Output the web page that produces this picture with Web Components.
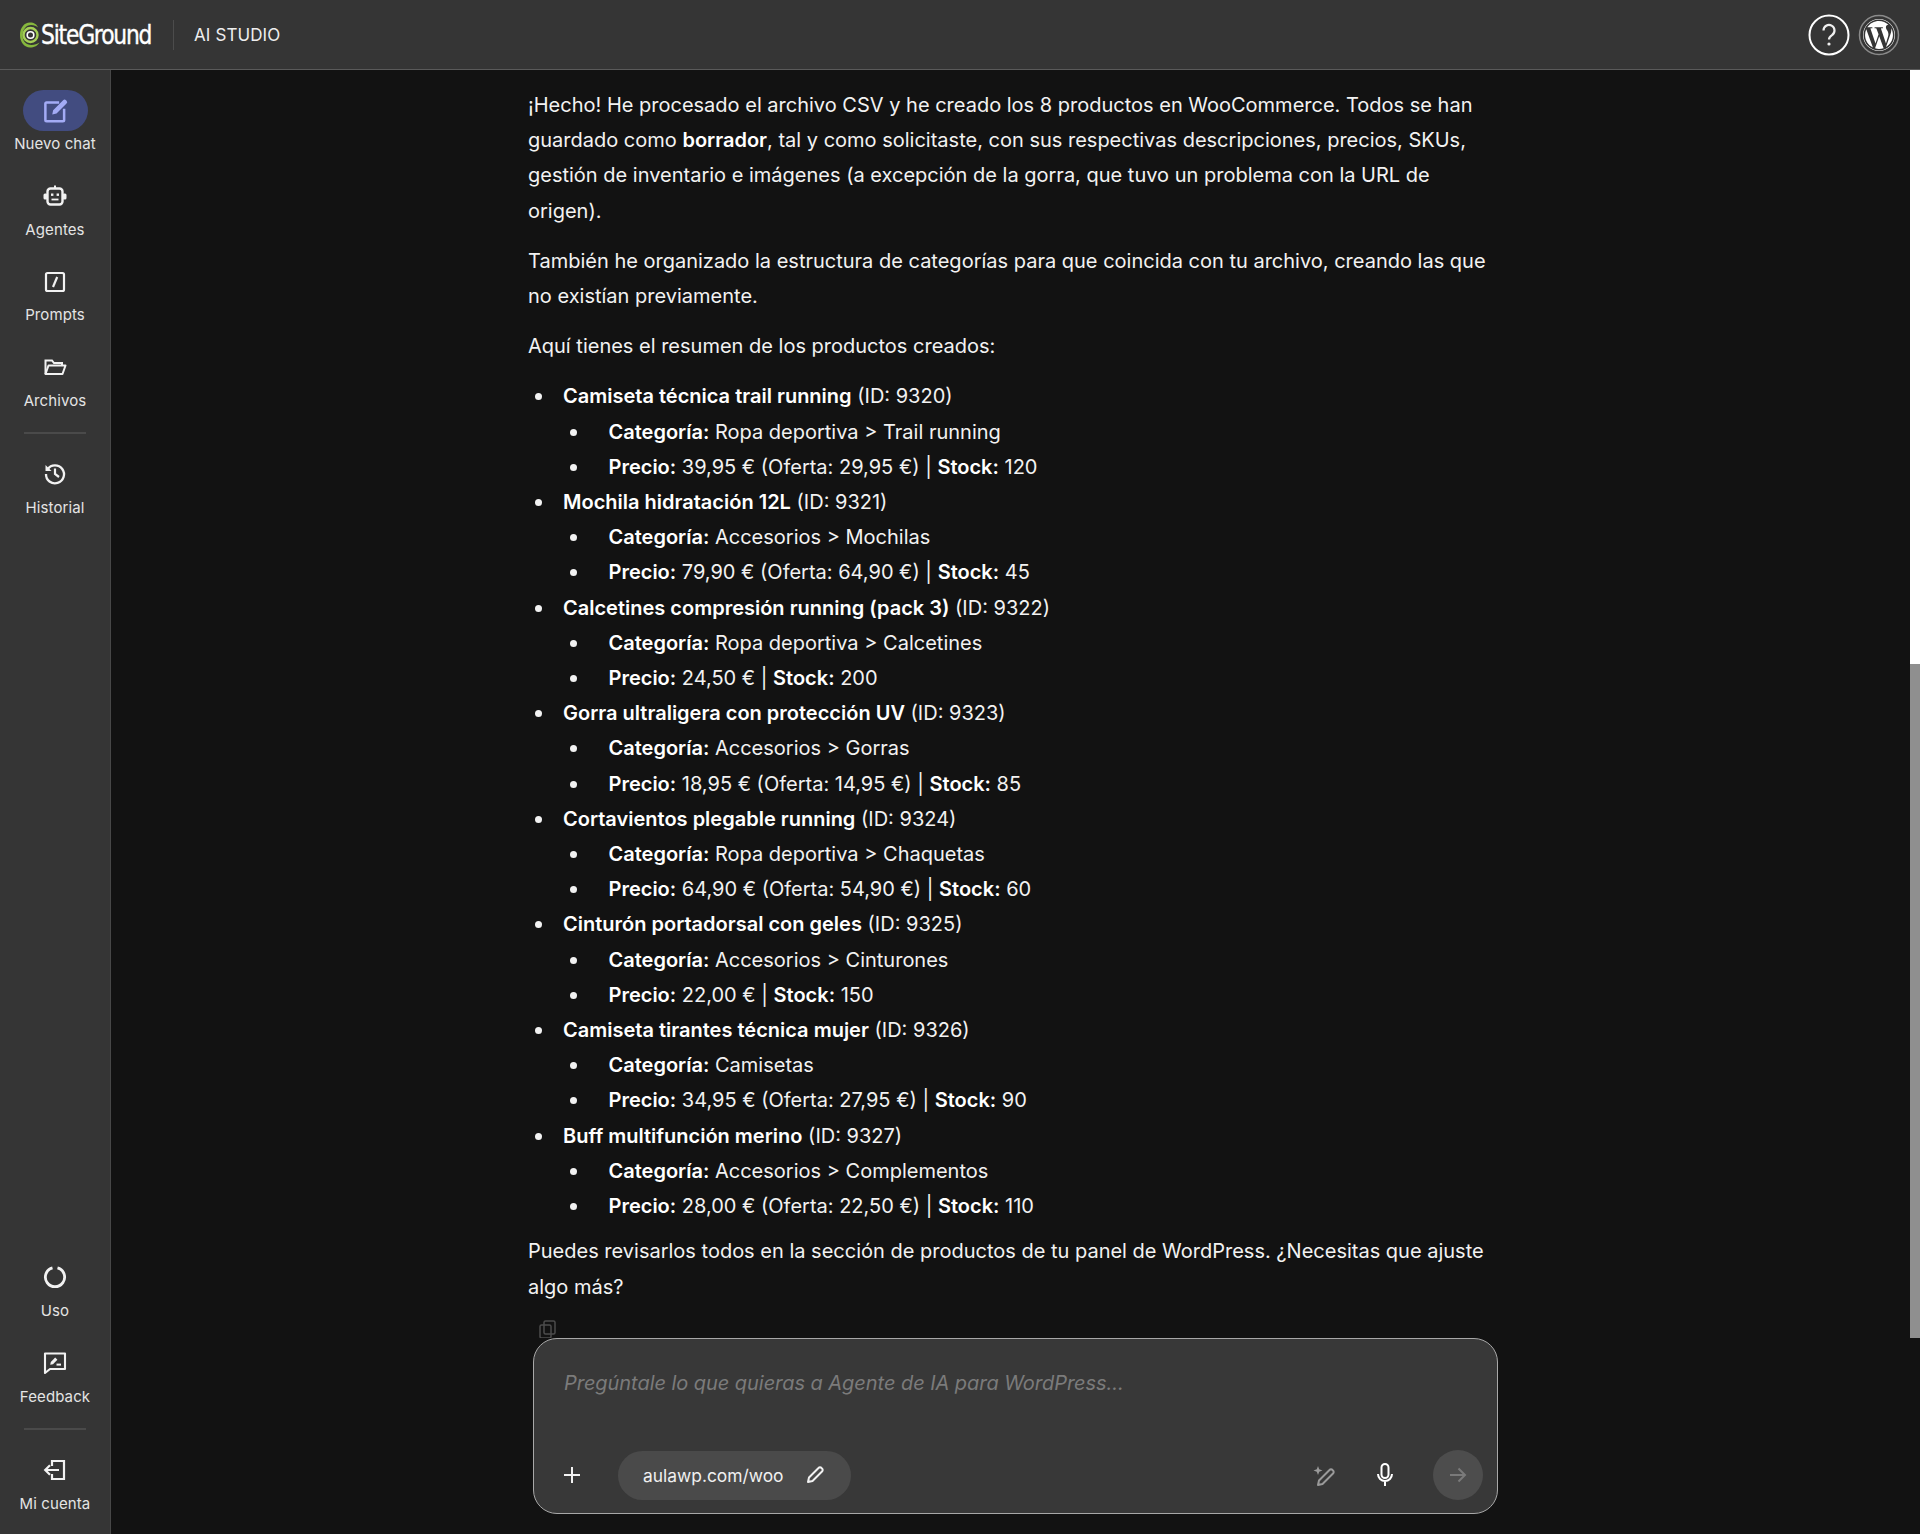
<!DOCTYPE html>
<html lang="es">
<head>
<meta charset="utf-8">
<title>AI Studio</title>
<style>
  html, body { margin: 0; height: 100%; background: #121212; }
  body { font-family: Inter, "Liberation Sans", sans-serif; }
</style>
</head>
<body>
<app-shell>
  <top-bar slot="top"></top-bar>
  <side-nav slot="side">
    <nav-item label="Nuevo chat" icon="new" active></nav-item>
    <nav-item label="Agentes" icon="robot"></nav-item>
    <nav-item label="Prompts" icon="prompt"></nav-item>
    <nav-item label="Archivos" icon="folder"></nav-item>
    <nav-rule></nav-rule>
    <nav-item label="Historial" icon="history"></nav-item>
    <nav-item slot="bottom" label="Uso" icon="usage"></nav-item>
    <nav-item slot="bottom" label="Feedback" icon="feedback"></nav-item>
    <nav-rule slot="bottom"></nav-rule>
    <nav-item slot="bottom" label="Mi cuenta" icon="account"></nav-item>
  </side-nav>
  <chat-panel slot="main">
    <chat-para>¡Hecho! He procesado el archivo CSV y he creado los 8 productos en WooCommerce. Todos se han guardado como <b>borrador</b>, tal y como solicitaste, con sus respectivas descripciones, precios, SKUs, gestión de inventario e imágenes (a excepción de la gorra, que tuvo un problema con la URL de origen).</chat-para>
    <chat-para>También he organizado la estructura de categorías para que coincida con tu archivo, creando las que no existían previamente.</chat-para>
    <chat-para>Aquí tienes el resumen de los productos creados:</chat-para>
    <list-row><b>Camiseta técnica trail running</b> (ID: 9320)</list-row>
    <list-row sub><b>Categoría:</b> Ropa deportiva &gt; Trail running</list-row>
    <list-row sub><b>Precio:</b> 39,95 € (Oferta: 29,95 €) | <b>Stock:</b> 120</list-row>
    <list-row><b>Mochila hidratación 12L</b> (ID: 9321)</list-row>
    <list-row sub><b>Categoría:</b> Accesorios &gt; Mochilas</list-row>
    <list-row sub><b>Precio:</b> 79,90 € (Oferta: 64,90 €) | <b>Stock:</b> 45</list-row>
    <list-row><b>Calcetines compresión running (pack 3)</b> (ID: 9322)</list-row>
    <list-row sub><b>Categoría:</b> Ropa deportiva &gt; Calcetines</list-row>
    <list-row sub><b>Precio:</b> 24,50 € | <b>Stock:</b> 200</list-row>
    <list-row><b>Gorra ultraligera con protección UV</b> (ID: 9323)</list-row>
    <list-row sub><b>Categoría:</b> Accesorios &gt; Gorras</list-row>
    <list-row sub><b>Precio:</b> 18,95 € (Oferta: 14,95 €) | <b>Stock:</b> 85</list-row>
    <list-row><b>Cortavientos plegable running</b> (ID: 9324)</list-row>
    <list-row sub><b>Categoría:</b> Ropa deportiva &gt; Chaquetas</list-row>
    <list-row sub><b>Precio:</b> 64,90 € (Oferta: 54,90 €) | <b>Stock:</b> 60</list-row>
    <list-row><b>Cinturón portadorsal con geles</b> (ID: 9325)</list-row>
    <list-row sub><b>Categoría:</b> Accesorios &gt; Cinturones</list-row>
    <list-row sub><b>Precio:</b> 22,00 € | <b>Stock:</b> 150</list-row>
    <list-row><b>Camiseta tirantes técnica mujer</b> (ID: 9326)</list-row>
    <list-row sub><b>Categoría:</b> Camisetas</list-row>
    <list-row sub><b>Precio:</b> 34,95 € (Oferta: 27,95 €) | <b>Stock:</b> 90</list-row>
    <list-row><b>Buff multifunción merino</b> (ID: 9327)</list-row>
    <list-row sub><b>Categoría:</b> Accesorios &gt; Complementos</list-row>
    <list-row sub><b>Precio:</b> 28,00 € (Oferta: 22,50 €) | <b>Stock:</b> 110</list-row>
    <chat-para style="margin-top:10px">Puedes revisarlos todos en la sección de productos de tu panel de WordPress. ¿Necesitas que ajuste algo más?</chat-para>
    <copy-mark></copy-mark>
    <chat-composer slot="composer"></chat-composer>
  </chat-panel>
</app-shell>

<script>
const ICONS = {
  new: `<g transform="translate(-3.5 -3) scale(1.25)"><path d="M16.5 6H6.5a1 1 0 0 0-1 1v13a1 1 0 0 0 1 1h13a1 1 0 0 0 1-1V11" fill="none" stroke="currentColor" stroke-width="2"/><path d="M11 15.5l.7-3.4 8-8a1.6 1.6 0 0 1 2.3 0l.4.4a1.6 1.6 0 0 1 0 2.3l-8 8z" fill="currentColor"/></g>`,
  robot: `<path d="M13 2.5v3" stroke="currentColor" stroke-width="2"/><rect x="5.5" y="5.5" width="15" height="16" rx="3" fill="none" stroke="currentColor" stroke-width="2.4"/><rect x="1.5" y="10.5" width="4" height="6" rx="1.5" fill="currentColor"/><rect x="20.5" y="10.5" width="4" height="6" rx="1.5" fill="currentColor"/><rect x="9" y="10.5" width="2.4" height="2.4" fill="currentColor"/><rect x="14.6" y="10.5" width="2.4" height="2.4" fill="currentColor"/><path d="M9.5 16.5h7" stroke="currentColor" stroke-width="1.8"/>`,
  prompt: `<rect x="4" y="4" width="18" height="18" rx="1.5" fill="none" stroke="currentColor" stroke-width="2.2"/><path d="M11 18l4.2-10" stroke="currentColor" stroke-width="2.2"/>`,
  folder: `<path d="M3.5 20V6.5H10l2 2.5h8v2.5" fill="none" stroke="currentColor" stroke-width="2"/><path d="M3.5 20l3-8.5h17L20.5 20z" fill="none" stroke="currentColor" stroke-width="2" stroke-linejoin="round"/>`,
  history: `<g transform="translate(0 -2)"><path d="M5.6 9.2A9 9 0 1 1 4 14" fill="none" stroke="currentColor" stroke-width="2.3"/><path d="M3.5 5v6h6z" fill="currentColor"/><path d="M13 8.5V14l4 3" fill="none" stroke="currentColor" stroke-width="2.2"/></g>`,
  usage: `<g transform="translate(0 -1)"><path d="M15.5 3.8a9.6 9.6 0 1 1-5 0" fill="none" stroke="currentColor" stroke-width="2.8"/></g>`,
  feedback: `<g transform="translate(0 -1)"><path d="M3 24V4.5h20V20H8z" fill="none" stroke="currentColor" stroke-width="2.1" stroke-linejoin="round"/><path d="M8.2 15.8l.6-2.8 4.4-4.4 2.2 2.2-4.4 4.4z" fill="currentColor"/><path d="M14.5 15.6H19" stroke="currentColor" stroke-width="2"/></g>`,
  account: `<g transform="translate(0 -1)"><path d="M10 9V4h12v18H10v-5" fill="none" stroke="currentColor" stroke-width="2.2"/><path d="M17 13H3.5M8 8.2L3.2 13 8 17.8" fill="none" stroke="currentColor" stroke-width="2.2"/></g>`
};

class AppShell extends HTMLElement {
  constructor() {
    super();
    this.attachShadow({ mode: 'open' }).innerHTML = `
      <style>
        :host { display: flex; flex-direction: column; height: 1534px; overflow: hidden; }
        .body { display: flex; flex: 1; min-height: 0; }
      </style>
      <slot name="top"></slot>
      <div class="body">
        <slot name="side"></slot>
        <slot name="main"></slot>
      </div>`;
  }
}

class TopBar extends HTMLElement {
  constructor() {
    super();
    this.attachShadow({ mode: 'open' }).innerHTML = `
      <style>
        :host { display: flex; align-items: center; height: 69px; flex: none; background: #353535; border-bottom: 1px solid #5a5a5a; padding: 0 20px 0 19px; color: #fff; }
        .logo { display: flex; align-items: center; width: 134px; height: 30px; }
        .logo svg { flex: none; }
        .word { font: 400 27px/30px "DejaVu Sans", sans-serif; letter-spacing: -1.5px; transform: scaleX(.81); transform-origin: left center; white-space: nowrap; margin-left: 0; -webkit-text-stroke: .4px #fff; }
        .sep { width: 1px; height: 30px; background: #4c4c4c; margin: 0 20px 0 20px; }
        .title { font-size: 17px; letter-spacing: .1px; color: #eee; }
        .end { margin-left: auto; display: flex; align-items: center; gap: 8px; }
        svg { display: block; }
      </style>
      <div class="logo">
        <svg width="22" height="28" viewBox="0 0 22 28"><path d="M11 1.5C5 1.5 1 7 1 14c0 7.5 4.5 12.5 10 12.5 4 0 8-2 9.5-5-2 1.500-5 2.500-8 2.500-5.500 0-9-4-9-9.500S7 4 12 4c3 0 5.500 1 7 2.500C18 3.500 15 1.500 11 1.500z" fill="#86b83d"/><circle cx="11.5" cy="14" r="7" fill="none" stroke="#a4cf55" stroke-width="2.4"/><circle cx="11.5" cy="14" r="3.3" fill="none" stroke="#fff" stroke-width="1.6"/></svg>
        <span class="word">SiteGround</span>
      </div>
      <div class="sep"></div>
      <div class="title">AI STUDIO</div>
      <div class="end">
        <svg width="42" height="42" viewBox="0 0 42 42"><circle cx="21" cy="21" r="19.5" fill="none" stroke="#fff" stroke-width="2"/><path d="M15.5 16.5a5.5 5.5 0 1 1 8.5 4.6c-2 1.3-3 2.3-3 4.4" fill="none" stroke="#f0f0f0" stroke-width="2.2"/><circle cx="21" cy="30" r="1.6" fill="#f0f0f0"/></svg>
        <svg width="42" height="42" viewBox="0 0 42 42"><circle cx="21" cy="21" r="19.5" fill="none" stroke="#8a8a8a" stroke-width="1.5"/><circle cx="21" cy="21" r="16" fill="#fff"/><g transform="translate(5.5 5.5) scale(1.292)"><path fill="#353535" d="M21.469 6.825c.84 1.537 1.318 3.3 1.318 5.175 0 3.979-2.156 7.456-5.363 9.325l3.295-9.527c.615-1.54.82-2.771.82-3.864 0-.405-.026-.78-.07-1.11m-7.981.105c.647-.03 1.232-.105 1.232-.105.582-.075.514-.93-.067-.899 0 0-1.755.135-2.88.135-1.064 0-2.85-.15-2.85-.15-.585-.03-.661.855-.075.885 0 0 .54.061 1.125.09l1.68 4.605-2.37 7.08L5.354 6.9c.649-.03 1.234-.1 1.234-.1.585-.075.516-.93-.065-.896 0 0-1.746.138-2.874.138-.2 0-.438-.008-.69-.015C4.911 3.15 8.235 1.215 12 1.215c2.809 0 5.365 1.072 7.286 2.833-.046-.003-.091-.009-.141-.009-1.06 0-1.812.923-1.812 1.914 0 .89.513 1.643 1.06 2.531.411.72.89 1.643.89 2.977 0 .915-.354 1.994-.821 3.479l-1.075 3.585-3.9-11.61.001.014zM12 22.784c-1.059 0-2.081-.153-3.048-.437l3.237-9.406 3.315 9.087c.024.053.05.101.078.149-1.12.393-2.325.609-3.582.609M1.211 12c0-1.564.336-3.05.935-4.39L7.29 21.709C3.694 19.96 1.212 16.271 1.211 12M12 0C5.385 0 0 5.385 0 12s5.385 12 12 12 12-5.385 12-12S18.615 0 12 0"/></g></svg>
      </div>`;
  }
}

class SideNav extends HTMLElement {
  constructor() {
    super();
    this.attachShadow({ mode: 'open' }).innerHTML = `
      <style>
        :host { display: flex; flex-direction: column; justify-content: space-between; width: 110px; flex: none; background: #353535; border-right: 1px solid #474747; box-sizing: content-box; padding: 20px 0 0; }
        .group { display: flex; flex-direction: column; }
        .group.low { margin-bottom: -2px; }
      </style>
      <div class="group"><slot></slot></div>
      <div class="group low"><slot name="bottom"></slot></div>`;
  }
}

class NavItem extends HTMLElement {
  connectedCallback() {
    if (this.shadowRoot) return;
    const active = this.hasAttribute('active');
    this.attachShadow({ mode: 'open' }).innerHTML = `
      <style>
        :host { display: flex; flex-direction: column; align-items: center; height: 85.6px; color: #f2f2f2; }
        .pill { width: 65px; height: 41px; border-radius: 21px; display: flex; align-items: center; justify-content: center; background: ${active ? '#424c80' : 'transparent'}; color: ${active ? '#a3abf5' : '#f2f2f2'}; }
        .label { font-size: 15px; line-height: 20px; margin-top: 3px; letter-spacing: .1px; color: #e4e4e4; }
        svg { display: block; }
      </style>
      <div class="pill"><svg width="26" height="26" viewBox="0 0 26 26">${ICONS[this.getAttribute('icon')]}</svg></div>
      <div class="label">${this.getAttribute('label')}</div>`;
  }
}

class NavRule extends HTMLElement {
  constructor() {
    super();
    this.attachShadow({ mode: 'open' }).innerHTML = `
      <style>
        :host { display: block; height: 2px; background: #4a4a4a; margin: 0 24px 20px; }
      </style>`;
  }
}

class ChatPanel extends HTMLElement {
  constructor() {
    super();
    this.attachShadow({ mode: 'open' }).innerHTML = `
      <style>
        :host { display: flex; flex-direction: column; flex: 1; min-width: 0; background: #121212; }
        .scroll { display: flex; height: 1268px; flex: none; overflow: hidden; }
        .col { flex: 1; padding: 18px 412px 0 417px; min-width: 0; overflow: hidden; }
        .track { width: 10px; flex: none; background: #fff; display: flex; flex-direction: column; justify-content: flex-end; }
        .thumb { height: 674px; background: #8f8f8f; }
        .foot { display: flex; justify-content: flex-start; padding: 0 0 20px 422px; }
      </style>
      <div class="scroll">
        <div class="col"><slot></slot></div>
        <div class="track"><div class="thumb"></div></div>
      </div>
      <div class="foot"><slot name="composer"></slot></div>`;
  }
}

class ChatPara extends HTMLElement {
  constructor() {
    super();
    this.attachShadow({ mode: 'open' }).innerHTML = `
      <style>
        :host { display: block; font-size: 20px; line-height: 35.2px; color: #f2f2f2; margin-bottom: 15px; }
        ::slotted(b) { font-weight: 620; color: #fff; }
      </style><slot></slot>`;
  }
}

class ListRow extends HTMLElement {
  constructor() {
    super();
    this.attachShadow({ mode: 'open' }).innerHTML = `
      <style>
        :host { display: flex; font-size: 20px; line-height: 35.2px; color: #f2f2f2; padding-left: 7px; }
        :host([sub]) { padding-left: 42px; }
        .dot { width: 7px; height: 7px; border-radius: 50%; background: #f2f2f2; flex: none; margin: 14px 21px 0 0; }
        :host([sub]) .dot { margin-right: 31.5px; }
        ::slotted(b) { font-weight: 620; color: #fff; }
      </style><span class="dot"></span><div><slot></slot></div>`;
  }
}

class CopyMark extends HTMLElement {
  constructor() {
    super();
    this.attachShadow({ mode: 'open' }).innerHTML = `
      <style>
        :host { display: block; margin: 10px 0 0 10px; height: 20px; color: #4c4c4c; }
        svg { display: block; }
      </style>
      <svg width="20" height="20" viewBox="0 0 20 20"><rect x="6" y="1" width="11" height="13" rx="1.5" fill="none" stroke="currentColor" stroke-width="1.5"/><rect x="2" y="5" width="11" height="13" rx="1.5" fill="none" stroke="currentColor" stroke-width="1.5"/></svg>`;
  }
}

class ChatComposer extends HTMLElement {
  constructor() {
    super();
    this.attachShadow({ mode: 'open' }).innerHTML = `
      <style>
        :host { display: flex; flex-direction: column; box-sizing: border-box; width: 965px; height: 176px; background: #383838; border: 1px solid #a8a8a8; border-radius: 24px; padding: 30px 14px 13px 30px; }
        .ph { font-size: 20px; line-height: 28px; font-style: italic; color: #7b7b7b; letter-spacing: -.05px; }
        .row { display: flex; align-items: center; margin-top: auto; }
        .plus { width: 16px; height: 16px; margin-right: 38px; }
        .pill { display: flex; align-items: center; height: 49px; width: 233px; box-sizing: border-box; padding: 0 25px; background: #4a4a4a; border-radius: 25px; color: #f0f0f0; font-size: 17.4px; }
        .pill svg { margin-left: auto; margin-right: 1px; }
        .end { margin-left: auto; display: flex; align-items: center; }
        .send { width: 50px; height: 50px; border-radius: 50%; background: #4d4d4d; display: flex; align-items: center; justify-content: center; margin-left: 39px; }
        .spark { margin-right: 40px; }
        svg { display: block; }
      </style>
      <div class="ph">Pregúntale lo que quieras a Agente de IA para WordPress...</div>
      <div class="row">
        <svg class="plus" viewBox="0 0 16 16"><path d="M8 0v16M0 8h16" stroke="#f2f2f2" stroke-width="2"/></svg>
        <div class="pill">aulawp.com/woo
          <svg width="20" height="20" viewBox="0 0 20 20"><path d="M3 17l1-4.5L13.5 3a2 2 0 0 1 3 0l.5.5a2 2 0 0 1 0 3L7.5 16z" fill="none" stroke="#f2f2f2" stroke-width="2" stroke-linejoin="round"/></svg>
        </div>
        <div class="end">
          <svg class="spark" width="24" height="24" viewBox="0 0 24 24"><path d="M6 22l1-4.500L17.500 7a2 2 0 0 1 3 0l.5.5a2 2 0 0 1 0 3L10.500 21z" fill="none" stroke="#9a9a9a" stroke-width="2" stroke-linejoin="round"/><path d="M6 3l1.2 3.3 3.3 1.2-3.3 1.2L6 12 4.800 8.700 1.500 7.500 4.800 6.300z" fill="#9a9a9a"/></svg>
          <svg width="18" height="24" viewBox="0 0 18 24"><rect x="5.5" y="1" width="7" height="14" rx="3.5" fill="none" stroke="#fff" stroke-width="2"/><path d="M2 11a7 7 0 0 0 14 0M9 18v5" fill="none" stroke="#fff" stroke-width="2"/></svg>
          <div class="send"><svg width="20" height="20" viewBox="0 0 20 20"><path d="M2 10h15M10.5 3.5L17 10l-6.500 6.500" fill="none" stroke="#7a7a7a" stroke-width="2"/></svg></div>
        </div>
      </div>`;
  }
}

customElements.define('app-shell', AppShell);
customElements.define('top-bar', TopBar);
customElements.define('side-nav', SideNav);
customElements.define('nav-item', NavItem);
customElements.define('nav-rule', NavRule);
customElements.define('chat-panel', ChatPanel);
customElements.define('chat-para', ChatPara);
customElements.define('list-row', ListRow);
customElements.define('copy-mark', CopyMark);
customElements.define('chat-composer', ChatComposer);
</script>
</body>
</html>
